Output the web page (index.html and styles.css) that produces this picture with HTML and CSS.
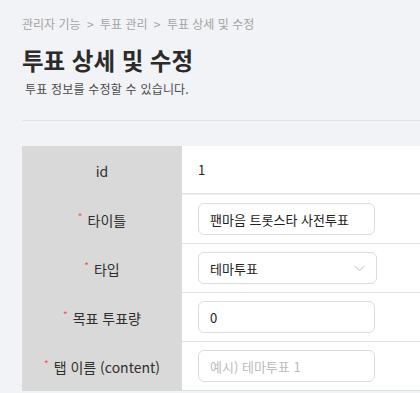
FILE: index.html
```html
<!DOCTYPE html>
<html lang="ko">
<head>
<meta charset="utf-8">
<link rel="stylesheet" href="styles.css">
</head>
<body>
<div class="page">
  <nav class="crumbs">관리자 기능 <span class="sep">&gt;</span> 투표 관리 <span class="sep">&gt;</span> 투표 상세 및 수정</nav>
  <h1 class="title">투표 상세 및 수정</h1>
  <p class="subtitle">투표 정보를 수정할 수 있습니다.</p>
  <hr class="divider">
  <div class="table">
    <div class="label">id</div>
    <div class="value"><span class="plain">1</span></div>

    <div class="label"><span class="req">*</span>타이틀</div>
    <div class="value"><div class="input w177">팬마음 트롯스타 사전투표</div></div>

    <div class="label"><span class="req">*</span>타입</div>
    <div class="value">
      <div class="input select w179">테마투표
        <svg class="arrow" width="11" height="7" viewBox="0 0 11 7"><path d="M0.5 0.8 L5.5 5.8 L10.5 0.8" fill="none" stroke="#bfbfbf" stroke-width="1"/></svg>
      </div>
    </div>

    <div class="label"><span class="req">*</span>목표 투표량</div>
    <div class="value"><div class="input w177">0</div></div>

    <div class="label"><span class="req">*</span>탭 이름 (content)</div>
    <div class="value"><div class="input w177 placeholder">예시) 테마투표 1</div></div>
  </div>
</div>
</body>
</html>
```
FILE: styles.css
```css
html, body {
  margin: 0;
  padding: 0;
  background: #f2f3f6;
  font-family: "Noto Sans CJK KR", "Noto Sans", sans-serif;
  color: #333;
  overflow: hidden;
}
.page {
  padding: 15px 0 0 22px;
}
.crumbs {
  font-size: 12px;
  line-height: 18px;
  color: #a3a3a3;
}
.crumbs .sep {
  margin: 0 3px;
}
.title {
  margin: 14px 0 0;
  font-size: 23.5px;
  line-height: 26px;
  font-weight: 700;
  color: #2b2b2b;
}
.subtitle {
  margin: 8px 0 0 3px;
  font-size: 12px;
  line-height: 16px;
  letter-spacing: 0.2px;
  color: #4a4a4a;
}
.divider {
  margin: 23px 0 0;
  border: 0;
  border-top: 1px solid #e3e4e7;
  height: 0;
}
.table {
  margin-top: 25px;
  display: grid;
  grid-template-columns: 160px 1fr;
  grid-auto-rows: 49px;
}
.label {
  background: #d9d9d9;
  display: flex;
  align-items: center;
  justify-content: center;
  font-size: 14px;
  color: #2f2f2f;
}
.value {
  background: #fff;
  border-bottom: 1px solid #e0e0e0;
  display: flex;
  align-items: center;
  padding-left: 16px;
  font-size: 13px;
  color: #222;
}
.table .value:nth-child(2) {
  height: 47px;
}
.req {
  color: #ff4d4f;
  font-size: 10px;
  margin-right: 5px;
  position: relative;
  top: -3px;
}
.input {
  box-sizing: border-box;
  height: 32px;
  border: 1px solid #dcdcdc;
  border-radius: 6px;
  display: flex;
  align-items: center;
  padding: 0 11px;
  font-size: 13px;
  color: #222;
  background: #fff;
}
.w177 { width: 177px; }
.w179 { width: 179px; justify-content: space-between; }
.placeholder { color: #bcbcbc; }
```
